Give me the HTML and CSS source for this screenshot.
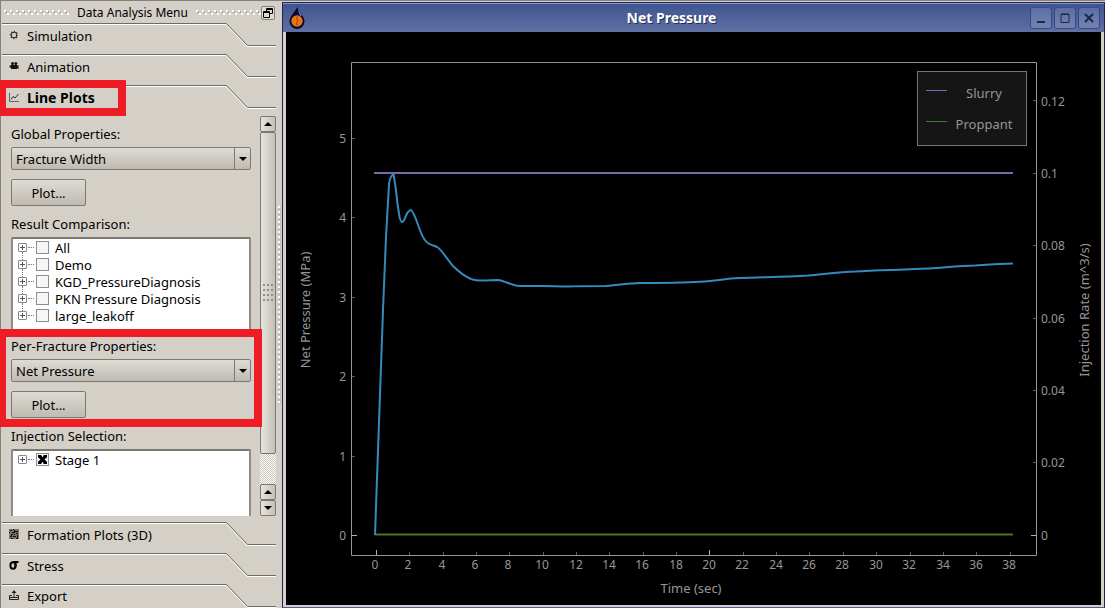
FILE: index.html
```html
<!DOCTYPE html>
<html lang="en">
<head>
<meta charset="utf-8">
<title>Data Analysis</title>
<link rel="stylesheet" href="styles.css">
</head>
<body>
<svg class="defs" aria-hidden="true">
  <symbol id="tab-edge" viewBox="0 0 274 24">
    <path d="M0 1.5H224L245 23.5H274" fill="none" stroke="#fff"/>
    <path d="M0 .5H224.5L245.500 22.5H274" fill="none" stroke="#6d6b66"/>
  </symbol>
</svg>
<div class="app">
  <aside class="dock">
    <header class="dock-title">
      <span class="grip"></span>
      <span>Data Analysis Menu</span>
      <span class="grip"></span>
      <button class="float-btn" aria-label="Float panel">
        <svg width="10" height="10" viewBox="0 0 10 10" fill="none" stroke="#000"><path d="M3.500 3.500V.5h6v5H7M3 1.500h7M.5 3.500h6v6h-6zM.5 4.500h6"/></svg>
      </button>
    </header>

    <button class="tab">
      <svg class="edge"><use href="#tab-edge"/></svg>
      <svg class="icon" viewBox="0 0 10 10" fill="none" stroke="#222"><circle cx="5" cy="5" r="2.800"/><path stroke-width="1.200" stroke-dasharray="1.200 1.628" stroke-dashoffset=".6" d="M8.600 5A3.600 3.600 0 1 1 1.400 5A3.600 3.600 0 1 1 8.600 5"/></svg>
      Simulation
    </button>
    <button class="tab">
      <svg class="edge"><use href="#tab-edge"/></svg>
      <svg class="icon" viewBox="0 0 10 10" fill="#111"><circle cx="3.500" cy="2.500" r="1.500"/><circle cx="6.800" cy="2.500" r="1.500"/><path d="M2 4h6v.8l1.500-.8v4L8 7.200V8H2V6.500H.5v-2H2z"/></svg>
      Animation
    </button>
    <button class="tab active">
      <svg class="edge"><use href="#tab-edge"/></svg>
      <svg class="icon" viewBox="0 0 10 10" fill="none" stroke="#666"><path d="M.5 1v8.500H10"/><path stroke="#333" d="M2 7.500l2-3 2 1.500 3.500-4"/></svg>
      Line Plots
      <span class="mark mark-tab"></span>
    </button>

    <div class="panel">
      <div class="form">
        <label class="label" for="global">Global Properties:</label>
        <div class="combo"><select id="global"><option>Fracture Width</option></select></div>
        <button class="push">Plot...</button>

        <div class="label">Result Comparison:</div>
        <ul class="tree results">
          <li><span class="expander"></span><label><input type="checkbox">All</label></li>
          <li><span class="expander"></span><label><input type="checkbox">Demo</label></li>
          <li><span class="expander"></span><label><input type="checkbox">KGD_PressureDiagnosis</label></li>
          <li><span class="expander"></span><label><input type="checkbox">PKN Pressure Diagnosis</label></li>
          <li><span class="expander"></span><label><input type="checkbox">large_leakoff</label></li>
        </ul>

        <section class="fracture">
          <label class="label" for="fracture">Per-Fracture Properties:</label>
          <div class="combo"><select id="fracture"><option>Net Pressure</option></select></div>
          <button class="push">Plot...</button>
          <span class="mark mark-section"></span>
        </section>

        <div class="label">Injection Selection:</div>
        <ul class="tree stages">
          <li><span class="expander"></span><label><input type="checkbox" checked>Stage 1</label></li>
        </ul>
      </div>
      <div class="scrollbar">
        <button class="up" aria-label="Scroll up"></button>
        <div class="thumb"><span></span></div>
        <div class="track"></div>
        <button class="up" aria-label="Scroll up"></button>
        <button class="down" aria-label="Scroll down"></button>
      </div>
    </div>

    <button class="tab">
      <svg class="edge"><use href="#tab-edge"/></svg>
      <svg class="icon" viewBox="0 0 10 10"><path fill="#77756f" d="M0 0h10v10H0z"/><path stroke="#111" fill="none" d="M1 1.500h2M4 .5h1M6 2.500h3M0 3.500h1M3 3.500h2M2 5.500h2M5 5.500h1M7 4.500h2M1 7.500h1M4 7.500h3M8 6.500h1M2 9.500h2M7 9.500h2M5.500 1v3M8.500 7v2M2.500 6v2"/></svg>
      Formation Plots (3D)
    </button>
    <button class="tab">
      <svg class="edge"><use href="#tab-edge"/></svg>
      <svg class="icon" viewBox="0 0 10 10" fill="none" stroke="#000" stroke-width="2"><ellipse cx="4" cy="5.500" rx="2.600" ry="3.200"/><path d="M4 2h5.500M6.500 3v4"/></svg>
      Stress
    </button>
    <button class="tab last">
      <svg class="edge"><use href="#tab-edge"/></svg>
      <svg class="icon" viewBox="0 0 10 10" fill="none" stroke="#222"><path d="M3 5.500H.5v4h9v-4H7M.5 7.500h9M5 7.500V2"/><path fill="#222" stroke="none" d="M5 0l2.500 3h-5z"/></svg>
      Export
    </button>
  </aside>
  <div class="splitter"></div>

  <main class="window">
    <header class="titlebar">
      <svg class="logo" width="16" height="22" viewBox="0 0 16 22">
        <path d="M8 0C9 4 15.500 9 15.500 14.500a7.500 7.500 0 0 1-15 0C.5 9 7 4 8 0z" fill="#080830"/>
        <path d="M9 2c1 3 3 5 4 7l-2-.5C10 6 9 4 9 2z" fill="#8a8ad8"/>
        <circle cx="8" cy="14" r="5.700" fill="#ee7410"/>
        <path d="M8.500 9.500l-1 2 1.500 2-1.500 2 .5 3" fill="none" stroke="#7a4a20"/>
      </svg>
      <h1>Net Pressure</h1>
      <div class="controls">
        <button aria-label="Minimize"><svg viewBox="0 0 10 10"><path d="M1 9h8" stroke-width="2"/></svg></button>
        <button aria-label="Maximize"><svg viewBox="0 0 10 10"><path d="M1 1.500h8v8H1zM1 1h8"/></svg></button>
        <button aria-label="Close"><svg viewBox="0 0 10 10"><path d="M1 1l8 8M9 1L1 9" stroke-width="2"/></svg></button>
      </div>
    </header>
    <svg class="chart" viewBox="286 32 815 573" role="img" aria-label="Net pressure and injection rate over time">
      <path class="axis" d="M351.500 62.500H1036.500V555.500H351.500z"/>
      <path class="major" d="M352 535.500h5M1036 535.500h-5M376.500 555v-5M709.500 555v-5"/>
      <path class="minor" d="M352 138.500h3M352 217.500h3M352 297.500h3M352 376.500h3M352 456.500h3M1036 100.500h-3M1036 173.500h-3M1036 245.500h-3M1036 318.500h-3M1036 390.500h-3M1036 462.500h-3M409.500 555v-3M443.500 555v-3M476.500 555v-3M509.500 555v-3M543.500 555v-3M576.500 555v-3M609.500 555v-3M643.500 555v-3M676.500 555v-3M743.500 555v-3M776.500 555v-3M809.500 555v-3M843.500 555v-3M876.500 555v-3M910.500 555v-3M943.500 555v-3M976.500 555v-3M1010.500 555v-3"/>
      <g class="ticks end">
        <text x="346" y="143">5</text><text x="346" y="222">4</text><text x="346" y="302">3</text>
        <text x="346" y="381">2</text><text x="346" y="461">1</text><text x="346" y="540">0</text>
      </g>
      <g class="ticks">
        <text x="1041" y="106">0.12</text><text x="1041" y="178">0.1</text><text x="1041" y="250">0.08</text>
        <text x="1041" y="323">0.06</text><text x="1041" y="395">0.04</text><text x="1041" y="467">0.02</text><text x="1041" y="540">0</text>
      </g>
      <g class="ticks mid">
        <text x="375" y="569">0</text><text x="408" y="569">2</text><text x="442" y="569">4</text><text x="475" y="569">6</text>
        <text x="508" y="569">8</text><text x="542" y="569">10</text><text x="576" y="569">12</text><text x="609" y="569">14</text>
        <text x="642" y="569">16</text><text x="676" y="569">18</text><text x="709" y="569">20</text><text x="742" y="569">22</text>
        <text x="776" y="569">24</text><text x="809" y="569">26</text><text x="842" y="569">28</text><text x="876" y="569">30</text>
        <text x="909" y="569">32</text><text x="943" y="569">34</text><text x="976" y="569">36</text><text x="1009" y="569">38</text>
      </g>
      <g class="names mid">
        <text x="691" y="593">Time (sec)</text>
        <text transform="translate(310 310) rotate(-90)">Net Pressure (MPa)</text>
        <text transform="translate(1089 310) rotate(-90)">Injection Rate (m^3/s)</text>
      </g>
      <path d="M374 173H1013" stroke="#7d66ad" stroke-width="2"/>
      <path d="M375 534.500H1013" stroke="#457a20" stroke-width="2"/>
      <path class="curve" d="M375 535L383 310L386 237L389 184Q389.500 179 391 177Q392.500 174 393.500 174L396 190L397.500 204L399.500 217Q401 222 402 222Q403.500 222 404.500 219L407.500 212.500Q410 210 411 210Q412 210 415.500 218L419.500 229Q422 236 424.500 239.500Q427 243 429.500 244C432 245.500 434 245.500 437 247C442 250 447 259 453 266C460 273 464 276 471 279C480 282 489 280 498 280C506 281 512 286 520 286H540C552 286 558 286.500 568 286.500C580 286 594 286 605 286C615 285.500 620 283.500 640 283C660 283 685 282.500 705 281.500C720 280.500 725 278.500 740 278C765 277 785 277 808 275.500C825 274 840 272 855 271.500C875 270 895 270 915 269C940 268 955 266 975 265.500C990 264.500 1000 264 1013 263.500"/>
      <rect x="917.500" y="71.500" width="109" height="74" fill="#151515" stroke="#767676"/>
      <path d="M926 90.500h21" stroke="#7d66ad"/>
      <path d="M926 121.500h21" stroke="#457a20"/>
      <g class="names mid"><text x="984" y="98">Slurry</text><text x="984" y="129">Proppant</text></g>
    </svg>
  </main>
</div>
</body>
</html>
```

FILE: styles.css
```css
* { box-sizing: border-box; }

body {
  margin: 0;
  background: #d4d0c8;
  color: #000;
  font: 13px/20px "Noto Sans", "Open Sans", sans-serif;
}

button, select, input { font: inherit; color: inherit; margin: 0; padding: 0; }
.defs { display: none; }

.app {
  display: grid;
  grid-template-columns: 277px 5px minmax(0, 1fr);
  height: 100vh;
  overflow: hidden;
  border-top: 1px solid #85827b;
}

/* Dock */
.dock {
  display: flex;
  flex-direction: column;
  border-left: 1px solid #85827b;
  padding: 0 1px;
  min-height: 0;
}

.dock-title {
  display: flex;
  flex: none;
  align-items: center;
  gap: 8px;
  height: 22px;
  padding: 2px 1px 0 2px;
  font-size: 12px;
}
.dock-title > span { white-space: nowrap; }
.grip {
  flex: 1;
  height: 6px;
  background:
    radial-gradient(circle at 1px 1px, #fff 1px, transparent 1px) 0 0 / 6px 6px,
    radial-gradient(circle at 1px 1px, #fff 1px, transparent 1px) 3px 3px / 6px 6px,
    radial-gradient(circle at 2px 2px, #aaa69e 1px, transparent 1px) 0 0 / 6px 6px;
}
.float-btn {
  display: grid;
  flex: none;
  place-items: center;
  width: 14px;
  height: 14px;
  margin-left: -8px;
  border: 1px solid #85827b;
  border-radius: 2px;
  background: #dedbd4;
}

.tab {
  position: relative;
  display: flex;
  flex: none;
  align-items: center;
  gap: 8px;
  height: 31px;
  padding: 0 0 5px 7px;
  border: 0;
  background: none;
  text-align: left;
}
.tab .edge { position: absolute; top: 0; left: 0; width: 274px; height: 24px; }
.tab .icon { width: 10px; height: 10px; margin-bottom: 3px; }
.tab.active { font-size: 14px; font-weight: bold; }
.tab.last { height: 24px; padding-bottom: 0; }

.panel {
  display: flex;
  flex: 1;
  justify-content: space-between;
  min-height: 0;
  margin-bottom: 6px;
}
.form { display: flex; flex-direction: column; width: 240px; margin-left: 9px; padding-top: 8px; }
.label { display: block; height: 20px; margin-bottom: 3px; }

.combo { position: relative; height: 23px; margin-bottom: 9px; }
.combo select {
  appearance: none;
  width: 100%;
  height: 23px;
  padding: 0 4px;
  border: 1px solid #7c7973;
  border-radius: 2px;
  background: linear-gradient(#dedbd4, #bfbbb3);
}
.combo::after {
  content: "";
  position: absolute;
  top: 10px;
  right: 4px;
  border: 4px solid transparent;
  border-top-color: #000;
  border-bottom: 0;
}
.combo::before {
  content: "";
  position: absolute;
  top: 1px;
  right: 16px;
  width: 1px;
  height: 21px;
  background: #7c7973;
}

.push {
  width: 75px;
  height: 27px;
  margin-bottom: 8px;
  border: 1px solid #7c7973;
  border-radius: 2px;
  background: linear-gradient(#dedbd4, #bfbbb3);
}

.tree {
  margin: 0;
  padding: 0 0 0 5px;
  list-style: none;
  border: 1px solid #7c7973;
  border-width: 2px 2px 0 2px;
  border-color: #7c7973 #8f8c86 #7c7973 #8f8c86;
  border-radius: 2px 2px 0 0;
  background: #fff;
  overflow: hidden;
}
.results { height: 92px; margin-bottom: 7px; }
.stages { flex: 1; }
.tree li { display: flex; align-items: center; height: 17px; }
.tree li + li .expander::before {
  content: "";
  position: absolute;
  left: 3px;
  bottom: 8px;
  height: 8px;
  border-left: 1px dotted #777;
}
.expander {
  position: relative;
  flex: none;
  width: 9px;
  height: 9px;
  margin-right: 9px;
  border: 1px solid #888;
  border-radius: 1px;
  background:
    linear-gradient(#555, #555) center / 5px 1px no-repeat,
    linear-gradient(#555, #555) center / 1px 5px no-repeat;
}
.expander::after {
  content: "";
  position: absolute;
  top: 3px;
  left: 9px;
  width: 6px;
  border-top: 1px dotted #777;
}
.tree label { display: flex; align-items: center; gap: 6px; white-space: nowrap; }
.tree input {
  appearance: none;
  display: grid;
  place-items: center;
  width: 13px;
  height: 13px;
  border: 1px solid #8e8e8e;
  background: #f6f6f6;
}
.tree input:checked::before {
  content: "";
  width: 9px;
  height: 9px;
  background: #000;
  clip-path: polygon(0 0, 35% 0, 50% 25%, 65% 0, 100% 0, 100% 25%, 72% 50%, 100% 75%, 100% 100%, 65% 100%, 50% 75%, 35% 100%, 0 100%, 0 75%, 28% 50%, 0 25%);
}

.fracture { position: relative; display: flex; flex-direction: column; }

/* Red highlight frames drawn over the dock */
.mark { position: absolute; z-index: 2; border: 8px solid #ee1c24; border-left-width: 6px; pointer-events: none; }
.mark-tab { top: -5px; left: -2px; width: 126px; height: 36px; }
.mark-section { top: -7px; left: -11px; width: 262px; height: 98px; }

.scrollbar { display: flex; flex-direction: column; width: 16px; }
.scrollbar button, .thumb {
  display: grid;
  place-items: center;
  flex: none;
  height: 16px;
  border: 1px solid #7c7973;
  border-radius: 2px;
  background: linear-gradient(90deg, #e6e3dc, #c4c0b8);
}
.scrollbar .thumb { flex: 322 1 0; }
.thumb span {
  width: 11px;
  height: 19px;
  background: radial-gradient(circle at 1px 1px, #918e87 1px, transparent 1px) 0 0 / 4px 5px;
}
.track { flex: 30 1 0; background: repeating-conic-gradient(#fff 0 25%, #c8c4bc 0 50%) 0 0 / 2px 2px; }
.up::after, .down::after { content: ""; border: 4px solid transparent; }
.up::after { border-top: 0; border-bottom-color: #000; }
.down::after { border-bottom: 0; border-top-color: #000; }

.splitter {
  align-self: center;
  width: 3px;
  height: 198px;
  margin-left: 1px;
  background: radial-gradient(circle at 1px 1px, #fff 1px, transparent 1px) 0 0 / 3px 5px, #c6c2ba;
}

/* Plot window */
.window {
  display: flex;
  flex-direction: column;
  min-width: 0;
  min-height: 0;
  margin-top: 1px;
  border: 1px solid #22225c;
  border-bottom: 1px solid #5a55a0;
  background: #d4d0c8;
}
.titlebar {
  display: grid;
  grid-template-columns: 16px 1fr 70px;
  align-items: center;
  flex: none;
  height: 29px;
  padding: 0 4px 0 6px;
  border-top: 1px solid #8798c4;
  background: linear-gradient(#3f5590, #6070a2);
}
.titlebar h1 { margin: 0; padding-left: 8px; color: #fff; font-size: 14px; line-height: 20px; text-align: center; text-shadow: 1px 1px 0 #222c50; }
.controls { display: flex; justify-content: flex-end; gap: 2px; }
.controls button {
  display: grid;
  place-items: center;
  width: 22px;
  height: 22px;
  border: 1px solid #344a86;
  border-radius: 3px;
  background: linear-gradient(#5c6ea4, #7482b0);
}
.controls svg { width: 10px; height: 10px; fill: none; stroke: #1d2747; }

.chart { flex: 1; min-height: 0; width: calc(100% - 6px); margin: 0 3px 2px; background: #000; font-size: 12px; }
.chart text { fill: #969696; }
.axis { fill: none; stroke: #969696; }
.major { stroke: #b0b0b0; }
.minor { stroke: #5c5c5c; }
.names { font-size: 13px; }
.mid { text-anchor: middle; }
.end { text-anchor: end; }
.curve { fill: none; stroke: #348abd; stroke-width: 2; stroke-linejoin: round; }
```
